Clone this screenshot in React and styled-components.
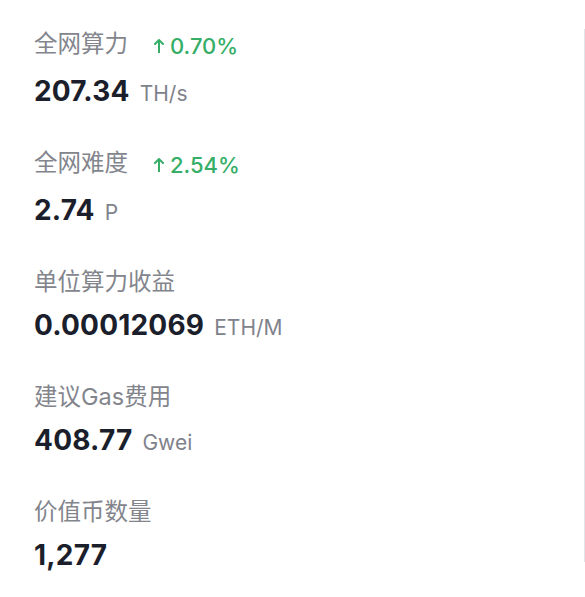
import React from "react";
import styled, { createGlobalStyle } from "styled-components";

const GlobalStyle = createGlobalStyle`
  html, body {
    margin: 0;
    padding: 0;
    background: #ffffff;
    min-height: 100%;
  }
  body {
    font-family: "Inter", "Noto Sans CJK SC", sans-serif;
    -webkit-font-smoothing: antialiased;
  }
`;

const Page = styled.div`
  display: flex;
  align-items: flex-start;
  min-height: 597px;
`;

const Stats = styled.div`
  flex: 1;
  padding: 30px 0 0 34px;
  display: flex;
  flex-direction: column;
  gap: 41px;
`;

const Divider = styled.div`
  flex: none;
  width: 1px;
  height: 533px;
  margin-top: 29px;
  background: #e2e5e8;
`;

const Item = styled.div`
  display: flex;
  flex-direction: column;
  gap: 12px;
`;

const LabelRow = styled.div`
  display: flex;
  align-items: flex-start;
  min-height: 28px;
`;

const Label = styled.span`
  font-family: "Inter", "Noto Sans CJK SC", sans-serif;
  font-size: 23.5px;
  line-height: 28px;
  color: #83858d;
  font-weight: 400;
`;

const Change = styled.span`
  display: inline-flex;
  align-items: center;
  gap: 6px;
  margin-left: 26px;
  font-family: "Inter", sans-serif;
  font-size: 22px;
  line-height: 32px;
  font-weight: 500;
  color: ${(p) => (p.$down ? "#e0524f" : "#36ae67")};
  svg {
    display: block;
    margin-top: -1px;
  }
`;

const ValueRow = styled.div`
  display: flex;
  align-items: baseline;
  gap: 10px;
`;

const Value = styled.span`
  font-family: "Inter", sans-serif;
  font-size: 28px;
  line-height: 34px;
  font-weight: 700;
  letter-spacing: 0.2px;
  color: #1b1e2b;
`;

const Unit = styled.span`
  font-family: "Inter", sans-serif;
  font-size: 21px;
  font-weight: 400;
  color: #80828b;
`;

const UpArrow = () => (
  <svg width="10" height="15" viewBox="0 0 10 15" fill="none">
    <path
      d="M5 14.5V2M1 6L5 2L9 6"
      stroke="currentColor"
      strokeWidth="2"
      strokeLinecap="round"
      strokeLinejoin="round"
    />
  </svg>
);

const stats = [
  { label: "全网算力", change: "0.70%", value: "207.34", unit: "TH/s" },
  { label: "全网难度", change: "2.54%", value: "2.74", unit: "P" },
  { label: "单位算力收益", value: "0.00012069", unit: "ETH/M" },
  { label: "建议Gas费用", value: "408.77", unit: "Gwei" },
  { label: "价值币数量", value: "1,277" },
];

export default function App() {
  return (
    <>
      <GlobalStyle />
      <Page>
        <Stats>
          {stats.map((s) => (
            <Item key={s.label}>
              <LabelRow>
                <Label>{s.label}</Label>
                {s.change && (
                  <Change>
                    <UpArrow />
                    {s.change}
                  </Change>
                )}
              </LabelRow>
              <ValueRow>
                <Value>{s.value}</Value>
                {s.unit && <Unit>{s.unit}</Unit>}
              </ValueRow>
            </Item>
          ))}
        </Stats>
        <Divider />
      </Page>
    </>
  );
}
